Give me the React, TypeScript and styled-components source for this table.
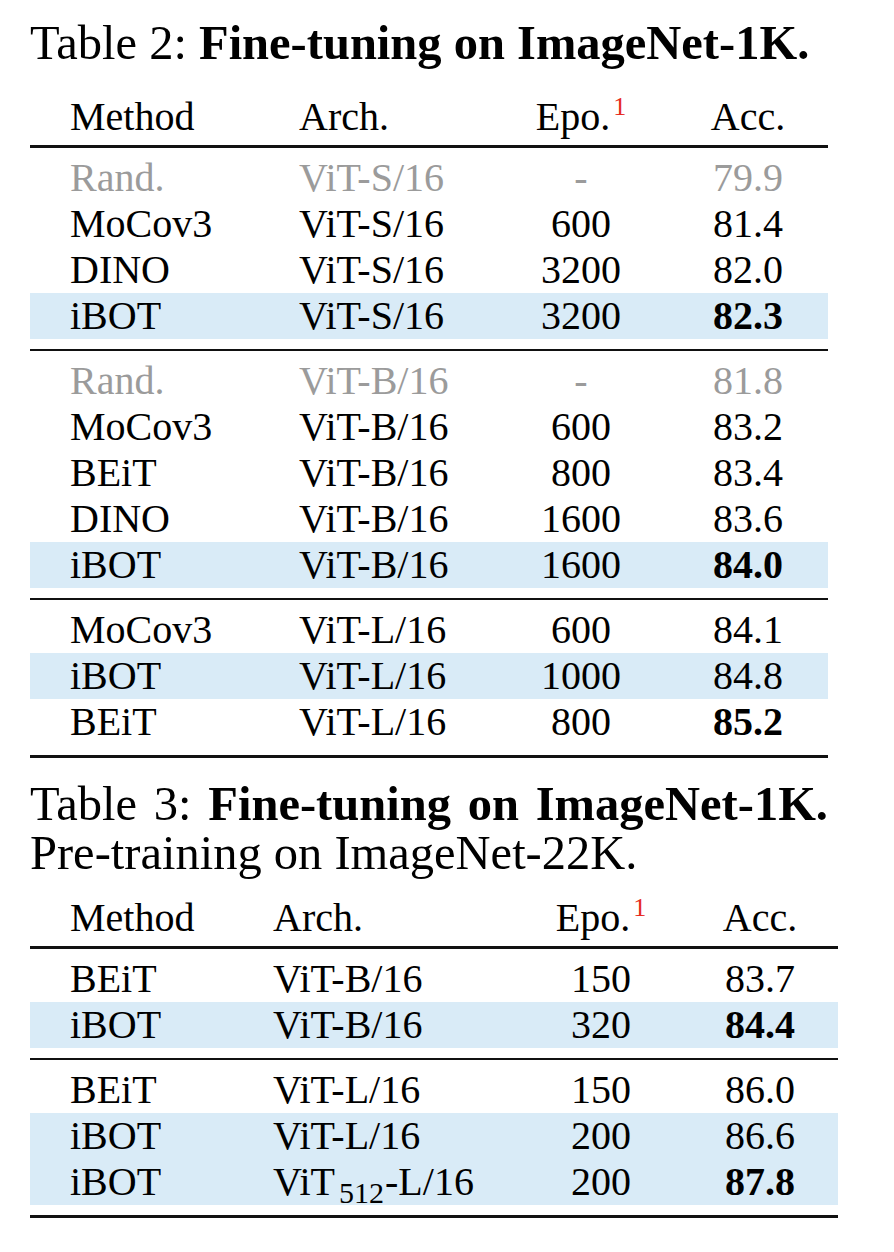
import * as React from 'react';
import styled, { createGlobalStyle } from 'styled-components';

type Row = {
  method: string;
  arch: React.ReactNode;
  epochs: string;
  acc: string;
  best?: boolean;
  mark?: boolean;
  faded?: boolean;
};

type TableSpec = {
  cols: string;
  width: number;
  groups: Row[][];
};

const GlobalStyle = createGlobalStyle`
  html, body {
    margin: 0;
    padding: 0;
    background: #fff;
  }
`;

const Page = styled.div`
  padding: 15px 0 0 30px;
  font-family: 'Liberation Serif', 'Times New Roman', serif;
  color: #000;
`;

const Caption = styled.div<{ $width: number }>`
  width: ${p => p.$width}px;
  font-size: 48.5px;
  line-height: 56px;
  margin-bottom: 23px;
  white-space: nowrap;
`;

const CaptionBlock = styled.div<{ $width: number }>`
  width: ${p => p.$width}px;
  font-size: 48.5px;
  line-height: 49px;
  margin: 21px 0 18px;
`;

const JustifiedLine = styled.div`
  text-align: justify;
  text-align-last: justify;
`;

const Table = styled.div<{ $width: number }>`
  width: ${p => p.$width}px;
  font-size: 40px;
  line-height: 46px;
  border-bottom: 3.5px solid #111;
`;

const Head = styled.div`
  padding-bottom: 5px;
  border-bottom: 3px solid #111;
`;

const Group = styled.div<{ $last?: boolean }>`
  padding: 7px 0 10px;
  border-bottom: ${p => (p.$last ? 'none' : '2.5px solid #111')};
`;

const Line = styled.div<{ $cols: string; $mark?: boolean; $faded?: boolean }>`
  display: grid;
  grid-template-columns: ${p => p.$cols};
  padding-left: 40px;
  background: ${p => (p.$mark ? '#d9ebf7' : 'transparent')};
  color: ${p => (p.$faded ? '#9b9b9b' : '#000')};
  white-space: nowrap;
`;

const Cell = styled.div<{ $center?: boolean; $bold?: boolean }>`
  text-align: ${p => (p.$center ? 'center' : 'left')};
  font-weight: ${p => (p.$bold ? 700 : 400)};
`;

const Note = styled.sup`
  color: #e62b1e;
  font-size: 26px;
  line-height: 0;
  vertical-align: 0;
  position: relative;
  top: -15px;
  margin-left: 3px;
`;

const Sub = styled.sub`
  font-size: 30px;
  line-height: 0;
  vertical-align: 0;
  position: relative;
  top: 8px;
  margin: 0 1px 0 4px;
`;

const table2: TableSpec = {
  cols: '229px 195px 174px 160px',
  width: 798,
  groups: [
    [
      { method: 'Rand.', arch: 'ViT-S/16', epochs: '-', acc: '79.9', faded: true },
      { method: 'MoCov3', arch: 'ViT-S/16', epochs: '600', acc: '81.4' },
      { method: 'DINO', arch: 'ViT-S/16', epochs: '3200', acc: '82.0' },
      { method: 'iBOT', arch: 'ViT-S/16', epochs: '3200', acc: '82.3', mark: true, best: true }
    ],
    [
      { method: 'Rand.', arch: 'ViT-B/16', epochs: '-', acc: '81.8', faded: true },
      { method: 'MoCov3', arch: 'ViT-B/16', epochs: '600', acc: '83.2' },
      { method: 'BEiT', arch: 'ViT-B/16', epochs: '800', acc: '83.4' },
      { method: 'DINO', arch: 'ViT-B/16', epochs: '1600', acc: '83.6' },
      { method: 'iBOT', arch: 'ViT-B/16', epochs: '1600', acc: '84.0', mark: true, best: true }
    ],
    [
      { method: 'MoCov3', arch: 'ViT-L/16', epochs: '600', acc: '84.1' },
      { method: 'iBOT', arch: 'ViT-L/16', epochs: '1000', acc: '84.8', mark: true },
      { method: 'BEiT', arch: 'ViT-L/16', epochs: '800', acc: '85.2', best: true }
    ]
  ]
};

const table3: TableSpec = {
  cols: '203px 247px 162px 156px',
  width: 808,
  groups: [
    [
      { method: 'BEiT', arch: 'ViT-B/16', epochs: '150', acc: '83.7' },
      { method: 'iBOT', arch: 'ViT-B/16', epochs: '320', acc: '84.4', mark: true, best: true }
    ],
    [
      { method: 'BEiT', arch: 'ViT-L/16', epochs: '150', acc: '86.0' },
      { method: 'iBOT', arch: 'ViT-L/16', epochs: '200', acc: '86.6', mark: true },
      {
        method: 'iBOT',
        arch: (
          <>
            ViT<Sub>512</Sub>-L/16
          </>
        ),
        epochs: '200',
        acc: '87.8',
        mark: true,
        best: true
      }
    ]
  ]
};

const ResultTable = ({ spec }: { spec: TableSpec }) => (
  <Table $width={spec.width}>
    <Head>
      <Line $cols={spec.cols}>
        <Cell>Method</Cell>
        <Cell>Arch.</Cell>
        <Cell $center>
          Epo.<Note>1</Note>
        </Cell>
        <Cell $center>Acc.</Cell>
      </Line>
    </Head>
    {spec.groups.map((rows, gi) => (
      <Group key={gi} $last={gi === spec.groups.length - 1}>
        {rows.map((r, ri) => (
          <Line key={ri} $cols={spec.cols} $mark={r.mark} $faded={r.faded}>
            <Cell>{r.method}</Cell>
            <Cell>{r.arch}</Cell>
            <Cell $center>{r.epochs}</Cell>
            <Cell $center $bold={r.best}>
              {r.acc}
            </Cell>
          </Line>
        ))}
      </Group>
    ))}
  </Table>
);

export default function App() {
  return (
    <Page>
      <GlobalStyle />
      <Caption $width={798}>
        Table 2: <b>Fine-tuning on ImageNet-1K.</b>
      </Caption>
      <ResultTable spec={table2} />
      <CaptionBlock $width={798}>
        <JustifiedLine>
          Table 3: <b>Fine-tuning on ImageNet-1K.</b>
        </JustifiedLine>
        <div>Pre-training on ImageNet-22K.</div>
      </CaptionBlock>
      <ResultTable spec={table3} />
    </Page>
  );
}
